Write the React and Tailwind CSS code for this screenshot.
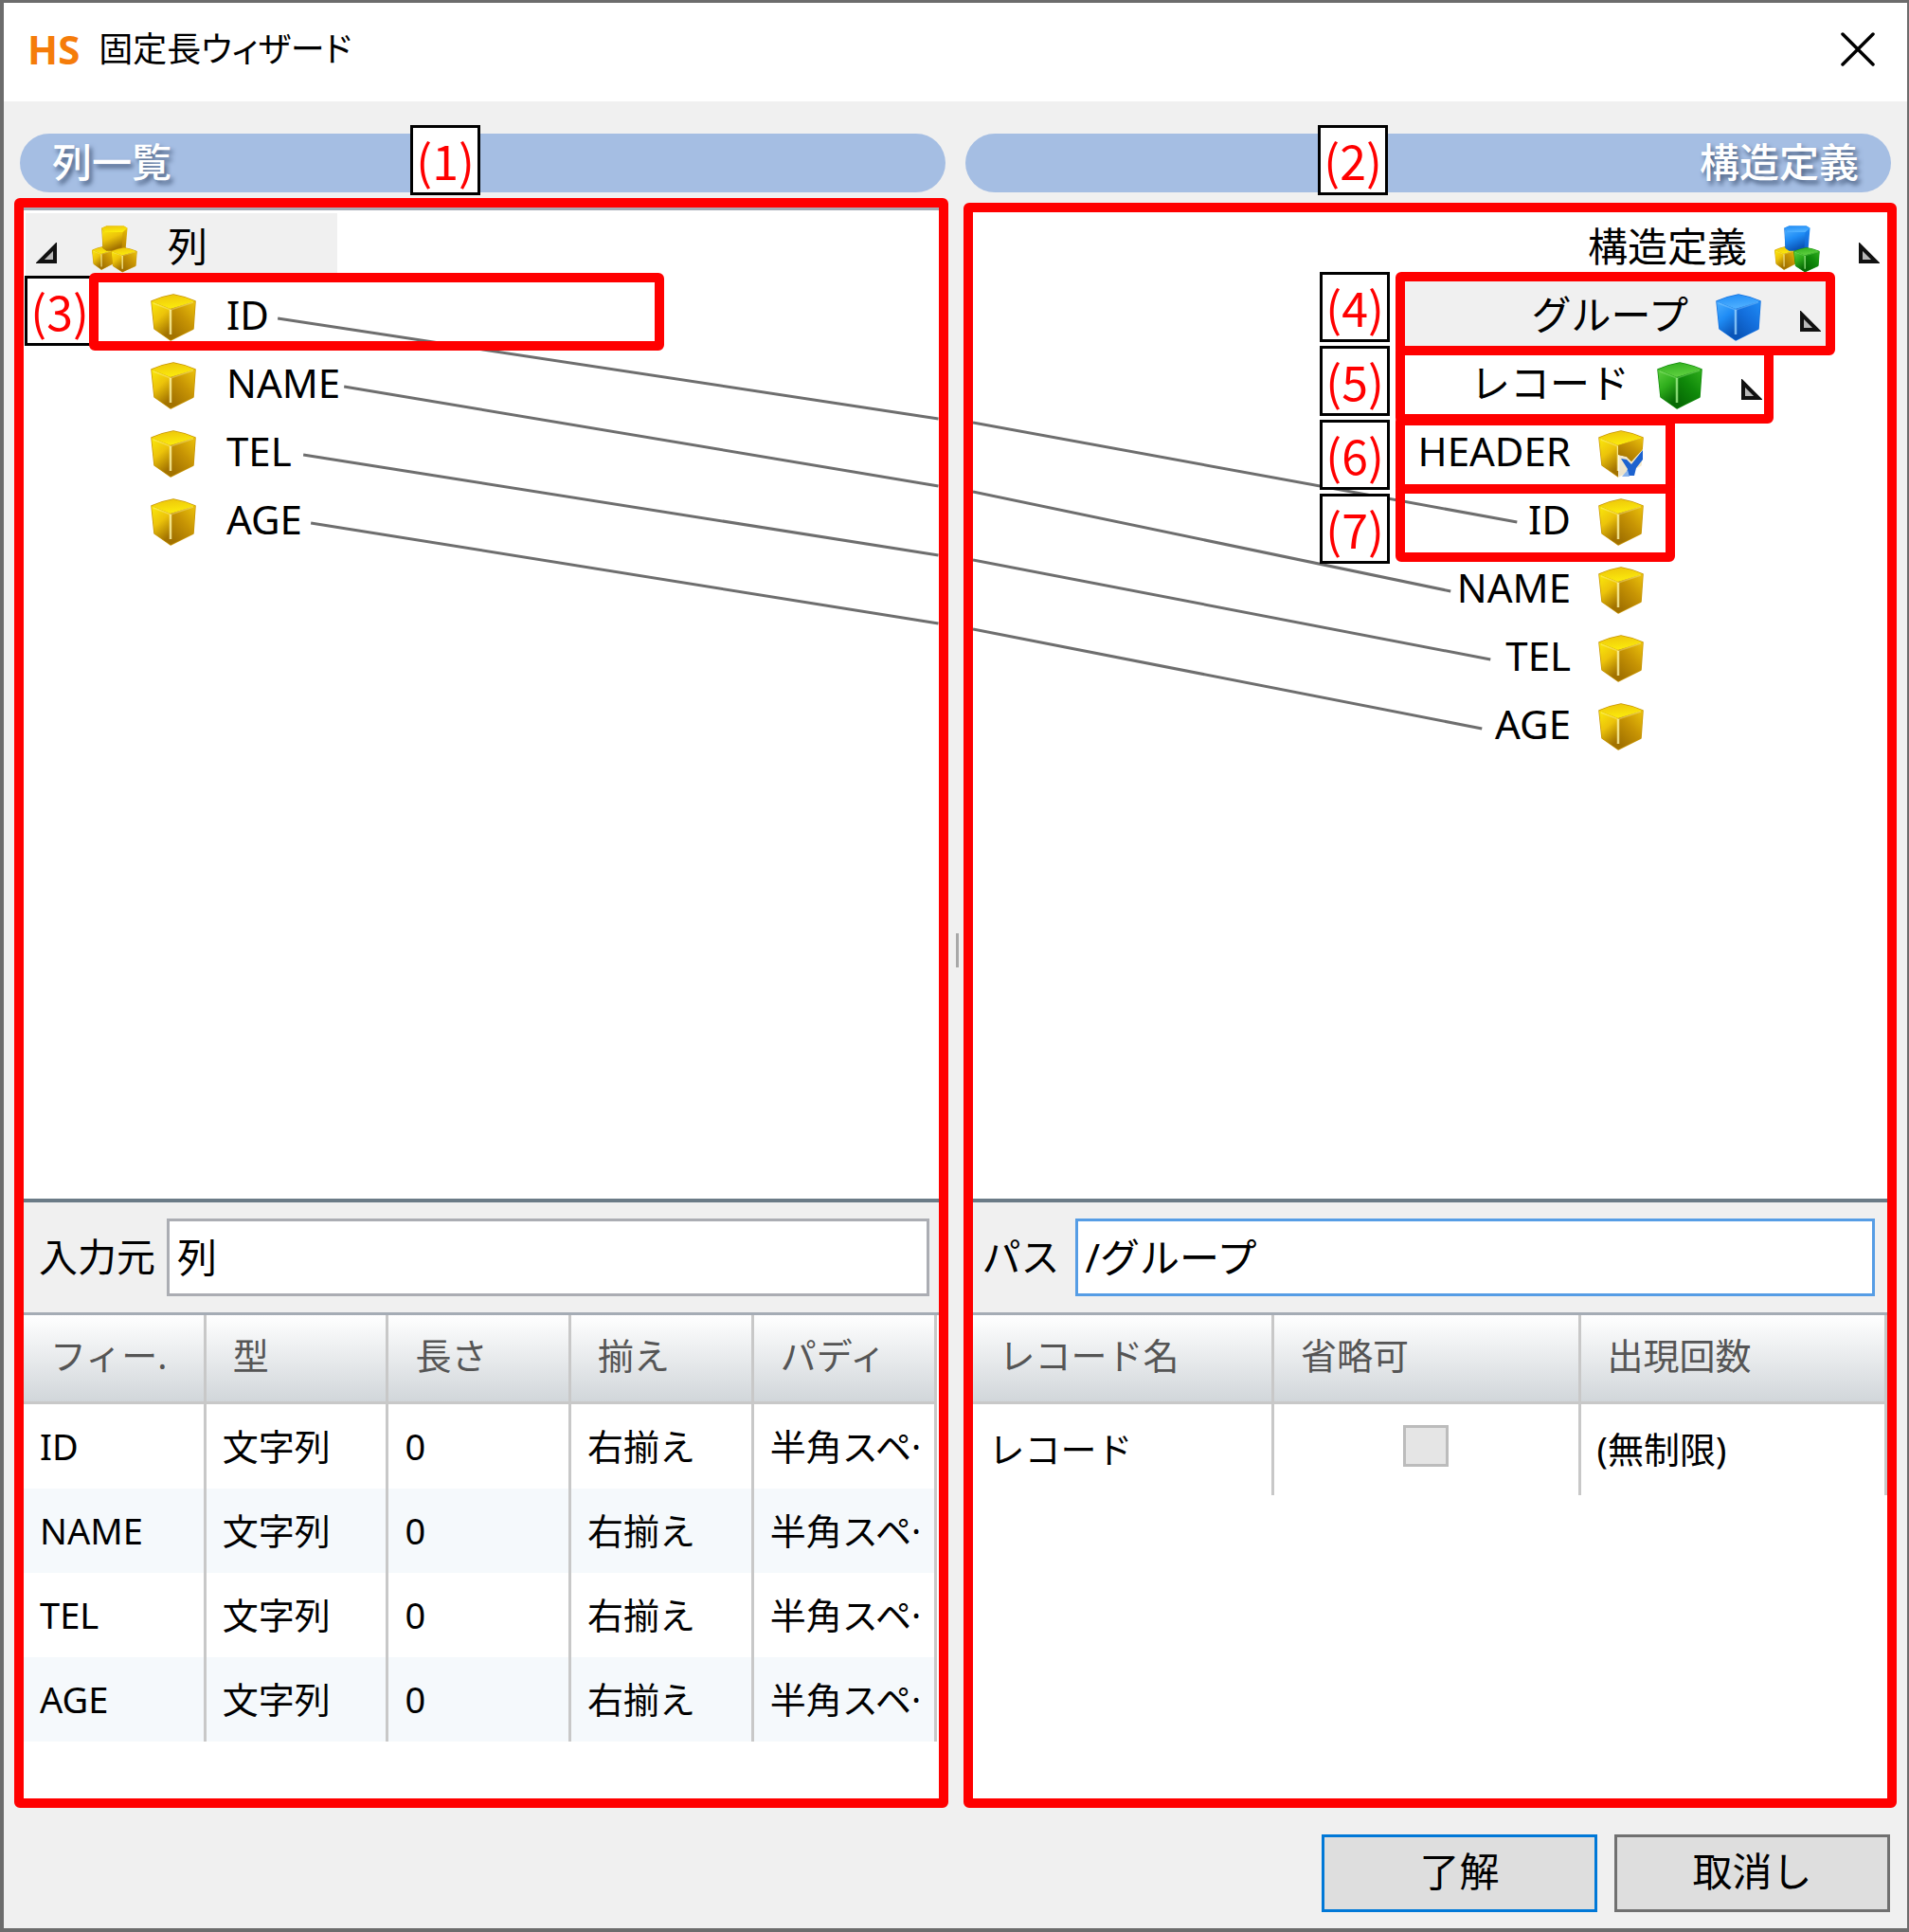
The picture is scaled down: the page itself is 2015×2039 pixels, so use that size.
import React, { useState } from "react";

const fields = ["ID", "NAME", "TEL", "AGE"];

const cubeColors = {
  gold: { top: "#fbea0c", left: "#ecc30a", right: "#c79404", edge: "#fff7a8", dark: "#a27200" },
  blue: { top: "#4fb0ff", left: "#1f8cf5", right: "#1470de", edge: "#9ad4ff", dark: "#0a55b8" },
  green: { top: "#5fd040", left: "#2fae1c", right: "#108a0a", edge: "#a4f08c", dark: "#066a04" },
};

function CubeDefs() {
  return (
    <svg width="0" height="0" className="absolute" aria-hidden="true">
      <defs>
        {Object.entries(cubeColors).map(([name, c]) => (
          <React.Fragment key={name}>
            <linearGradient id={`${name}-top`} x1="0" y1="0" x2="0.3" y2="1">
              <stop offset="0" stopColor={c.left} />
              <stop offset="1" stopColor={c.top} />
            </linearGradient>
            <linearGradient id={`${name}-left`} x1="0" y1="0" x2="0.4" y2="1">
              <stop offset="0" stopColor={c.top} />
              <stop offset="0.5" stopColor={c.left} />
              <stop offset="1" stopColor={c.dark} />
            </linearGradient>
            <linearGradient id={`${name}-right`} x1="1" y1="0" x2="0.3" y2="1">
              <stop offset="0" stopColor={c.left} />
              <stop offset="0.5" stopColor={c.right} />
              <stop offset="1" stopColor={c.dark} />
            </linearGradient>
          </React.Fragment>
        ))}
      </defs>
    </svg>
  );
}

function CubeShape({ color }) {
  const c = cubeColors[color];
  return (
    <g strokeLinejoin="round">
      <path d="M1 8 Q12 3 24 1 Q36 3 47 8 L45 37 L21 49 L4 37 Z" fill={c.right} stroke={c.right} strokeWidth="1.5" />
      <path d="M1 8 Q12 3 24 1 Q36 3 47 8 L21 16 Z" fill={`url(#${color}-top)`} />
      <path d="M1 8 L21 16 L21 49 L4 37 Z" fill={`url(#${color}-left)`} />
      <path d="M21 16 L47 8 L45 37 L21 49 Z" fill={`url(#${color}-right)`} />
      <path d="M3 10 L21 17 L45 9" fill="none" stroke={c.edge} strokeWidth="1.5" opacity="0.35" />
      <path d="M21 17 V43" stroke={c.edge} strokeWidth="2.5" opacity="0.8" />
    </g>
  );
}

function Cube({ color = "gold", checked }) {
  return (
    <svg viewBox="0 0 48 50" className="mt-[3px] h-[50px] w-12 shrink-0" aria-hidden="true">
      <CubeShape color={color} />
      {checked && (
        <>
          <path d="M21 26 L30 28 L35 33 L48 19 V50 H21 Z" fill="#fff" opacity="0.8" />
          <path d="M21 16 L47 8 L46 21 L35 33 L30 28 L21 26 Z" fill="url(#gold-right)" />
          <path d="M24 30 L30 31 L35 36 L47 21 V31 L40 40 L38 48 H29 L31 41 Z" fill="#1c62cf" />
          <path d="M25 49 L31 42 L33 49 Z" fill="#8ab4ec" />
        </>
      )}
    </svg>
  );
}

function CubeGroup({ colors }) {
  return (
    <svg viewBox="0 0 48 50" className="mt-[3px] h-[50px] w-12 shrink-0" aria-hidden="true">
      <g transform="translate(0 22) scale(0.48 0.5)">
        <CubeShape color={colors[1]} />
      </g>
      <g transform="translate(9 0) scale(0.62 0.54)">
        <path d="M2 5 L10 1 H40 L46 5 L43 45 L36 49 H10 L4 44 Z" fill={`url(#${colors[0]}-right)`} />
        <path d="M2 5 L10 1 H40 L46 5 L38 13 H7 Z" fill={`url(#${colors[0]}-top)`} />
        <path d="M3 7 L7 13 H38 L36 49 H10 L4 44 Z" fill={`url(#${colors[0]}-left)`} />
      </g>
      <g transform="translate(20 23) scale(0.58 0.53)">
        <CubeShape color={colors[2]} />
      </g>
    </svg>
  );
}

function Toggle({ flip }) {
  return (
    <button type="button" aria-label="開閉" className="block">
      <svg viewBox="0 0 22 22" className="mt-3 size-[22px]" aria-hidden="true">
        <path
          d={flip ? "M2 4 V20 H18 Z" : "M20 4 V20 H4 Z"}
          fill="#b8b8b8"
          stroke="#111"
          strokeWidth="4"
        />
      </svg>
    </button>
  );
}

function Badge({ n, className = "" }) {
  return (
    <span
      className={`flex size-[74px] items-center justify-center border-3 border-black bg-white pb-[2px] font-['Noto_Sans_CJK_JP',sans-serif] text-[50px] leading-none font-normal text-[#ff0000] ${className}`}
    >
      ({n})
    </span>
  );
}

function Callout({ className }) {
  return (
    <span
      className={`pointer-events-none absolute h-[82px] rounded-md border-10 border-[#ff0000] ${className}`}
    />
  );
}

function PanelTitle({ children, className }) {
  return (
    <h2
      className={`relative flex h-[62px] items-center rounded-full bg-[#a5bee3] px-[34px] pb-[2px] text-[42px] font-medium text-white [text-shadow:3px_4px_5px_#4a5f80] ${className}`}
    >
      {children}
    </h2>
  );
}

// lines that link a field in the left tree to one in the right tree
function Links({ lines }) {
  return (
    <svg
      viewBox="0 0 965 560"
      preserveAspectRatio="none"
      className="pointer-events-none absolute top-0 left-0 h-[560px] w-full"
      aria-hidden="true"
    >
      {lines.map((l) => (
        <line
          key={l[1]}
          x1={l[0]}
          y1={l[1]}
          x2={l[2]}
          y2={l[3]}
          stroke="#6e6e6e"
          strokeWidth="3"
        />
      ))}
    </svg>
  );
}

const leftLines = [
  [268, 111, 965, 217],
  [338, 183, 965, 288],
  [295, 255, 965, 361],
  [303, 327, 965, 433],
];

const rightLines = [
  [0, 221, 574, 326],
  [0, 294, 504, 399],
  [0, 366, 546, 471],
  [0, 439, 537, 544],
];

const th = "overflow-hidden border-r-3 border-b-3 border-[#c8c8c8] pb-2 pl-7 text-left font-normal whitespace-nowrap";
const td = "overflow-hidden border-r-3 border-[#c8c8c8] pb-[2px] pl-[17px] whitespace-nowrap";

function ColumnPanel() {
  const [source, setSource] = useState("列");
  return (
    <section className="flex flex-col rounded-md border-10 border-[#ff0000] bg-white">
      <div className="flex-1 border-t-3 border-[#a5acb5] pt-[3px]">
        <div className="relative">
          <Links lines={leftLines} />
          <ul>
            <li className="flex h-[72px] w-[331px] items-center bg-[#f0f0f0] bg-clip-content pl-[2px]">
              <span className="w-[70px] pl-[11px]">
                <Toggle />
              </span>
              <CubeGroup colors={["gold", "gold", "gold"]} />
              <span className="pb-[2px] pl-8">列</span>
            </li>
            {fields.map((name, i) => (
              <li key={name} className="relative flex h-[72px] items-center pl-[134px]">
                <Cube />
                <span className="pb-[2px] pl-8">{name}</span>
                {i === 0 && (
                  <>
                    <Badge n={3} className="absolute -top-[6px] left-px" />
                    <Callout className="-top-[9px] left-[69px] w-[607px]" />
                  </>
                )}
              </li>
            ))}
          </ul>
        </div>
      </div>
      <div className="flex items-center gap-3 border-t-4 border-[#6b7b87] bg-[#f0f0f0] py-[17px] pr-[10px] pl-4">
        <label htmlFor="source" className="shrink-0 pb-[2px] text-[41px]">
          入力元
        </label>
        <input
          id="source"
          value={source}
          onChange={(e) => setSource(e.target.value)}
          className="h-[82px] min-w-0 flex-1 border-3 border-[#abadb3] bg-white px-2 pb-[6px] outline-none"
        />
      </div>
      <div className="h-[513px] border-t-3 border-[#a5acb5] text-[38px]">
        <table className="w-full table-fixed border-separate border-spacing-0 pr-[2px]">
          <thead>
            <tr className="h-[94px] bg-linear-to-b from-white to-[#d0d5d9] text-[#555]">
              <th className={th}>フィー.</th>
              <th className={th}>型</th>
              <th className={th}>長さ</th>
              <th className={th}>揃え</th>
              <th className={th}>パディ</th>
            </tr>
          </thead>
          <tbody>
            {fields.map((name) => (
              <tr key={name} className="h-[89px] even:bg-[#f5f9fc]">
                <td className={td}>{name}</td>
                <td className={td}>文字列</td>
                <td className={td}>0</td>
                <td className={td}>右揃え</td>
                <td className={td}>半角スペ·</td>
              </tr>
            ))}
          </tbody>
        </table>
      </div>
    </section>
  );
}

function StructurePanel() {
  const [path, setPath] = useState("/グループ");
  return (
    <section className="mt-[5px] flex flex-col rounded-md border-10 border-[#ff0000] bg-white">
      <div className="flex-1 pt-px">
        <div className="relative">
          <Links lines={rightLines} />
          <ul>
            <li className="flex h-[72px] items-center justify-end pr-2">
              <span className="pr-[29px] pb-[2px]">構造定義</span>
              <CubeGroup colors={["blue", "gold", "green"]} />
              <span className="pl-[41px]">
                <Toggle flip />
              </span>
            </li>
            <li className="relative flex h-[72px] items-center justify-end pr-[70px]">
              <span className="pointer-events-none absolute -top-[10px] right-[55px] h-[88px] w-[464px] rounded-md border-10 border-[#ff0000] bg-[#f0f0f0]" />
              <span className="relative pr-[29px] pb-[2px]">グループ</span>
              <span className="relative flex">
                <Cube color="blue" />
              </span>
              <span className="relative pl-[41px]">
                <Toggle flip />
              </span>
            </li>
            <li className="relative flex h-[72px] items-center justify-end pr-[132px]">
              <span className="pr-[29px] pb-[2px]">レコード</span>
              <Cube color="green" />
              <span className="pl-[41px]">
                <Toggle flip />
              </span>
              <Callout className="-top-1 right-[120px] w-[399px]" />
            </li>
            <li className="relative flex h-[72px] items-center justify-end pr-[257px]">
              <span className="pr-[29px] pb-[2px]">HEADER</span>
              <Cube checked />
              <Callout className="-top-[2px] right-[224px] w-[295px]" />
            </li>
            {fields.map((name, i) => (
              <li key={name} className="relative flex h-[72px] items-center justify-end pr-[257px]">
                <span className="pr-[29px] pb-[2px]">{name}</span>
                <Cube />
                {i === 0 && <Callout className="-top-[2px] right-[224px] w-[295px]" />}
              </li>
            ))}
          </ul>
          <div className="absolute top-[62px] right-[525px] flex flex-col gap-1">
            <Badge n={4} />
            <Badge n={5} />
            <Badge n={6} />
            <Badge n={7} />
          </div>
        </div>
      </div>
      <div className="flex items-center gap-4 border-t-4 border-[#6b7b87] bg-[#f0f0f0] py-[17px] pr-[13px] pl-[10px]">
        <label htmlFor="path" className="shrink-0 pb-[2px] text-[41px]">
          パス
        </label>
        <input
          id="path"
          value={path}
          onChange={(e) => setPath(e.target.value)}
          className="h-[82px] min-w-0 flex-1 border-3 border-[#569de5] bg-white px-2 pb-[6px] outline-none"
        />
      </div>
      <div className="h-[513px] border-t-3 border-[#a5acb5] text-[38px]">
        <table className="w-full table-fixed border-separate border-spacing-0">
          <thead>
            <tr className="h-[94px] bg-linear-to-b from-white to-[#d0d5d9] text-[#555]">
              <th className={`w-[33%] ${th}`}>レコード名</th>
              <th className={th}>省略可</th>
              <th className={th}>出現回数</th>
            </tr>
          </thead>
          <tbody>
            <tr className="h-24">
              <td className={td}>レコード</td>
              <td className="border-r-3 border-[#c8c8c8] text-center">
                <input
                  type="checkbox"
                  aria-label="省略可"
                  disabled
                  className="mb-2 h-11 w-12 appearance-none border-3 border-[#bcbcbc] bg-[#e5e5e5] align-middle"
                />
              </td>
              <td className={td}>(無制限)</td>
            </tr>
          </tbody>
        </table>
      </div>
    </section>
  );
}

function App() {
  return (
    <div className="flex min-h-screen flex-col border-4 border-t-3 border-r-2 border-[#6c6c6c] bg-[#f0f0f0] font-['Noto_Sans','Noto_Sans_CJK_JP',sans-serif] text-[42px] leading-none text-black">
      <CubeDefs />
      <header className="flex h-[104px] items-center bg-white pr-[34px] pb-[6px] pl-[25px]">
        <span className="font-bold text-[#f57c0a]">HS</span>
        <h1 className="pl-5 text-[36px] [font-feature-settings:'palt']">固定長ウィザード</h1>
        <button type="button" aria-label="閉じる" className="ml-auto">
          <svg viewBox="0 0 36 36" className="size-9" aria-hidden="true">
            <path d="M2 2 L34 34 M34 2 L2 34" stroke="#000" strokeWidth="3.5" strokeLinecap="round" />
          </svg>
        </button>
      </header>

      <div className="grid grid-cols-2 gap-[21px] px-[17px] pt-[34px] pb-[6px]">
        <PanelTitle>
          列一覧
          <Badge n={1} className="absolute -top-[9px] left-[412px] text-shadow-none" />
        </PanelTitle>
        <PanelTitle className="justify-end">
          構造定義
          <Badge n={2} className="absolute -top-[9px] left-[372px] text-shadow-none" />
        </PanelTitle>
      </div>

      <main className="relative grid flex-1 grid-cols-2 gap-4 px-[11px]">
        <ColumnPanel />
        <StructurePanel />
        <span className="absolute top-[776px] left-1/2 h-9 w-[3px] bg-[#a8a8a8]" />
      </main>

      <footer className="flex justify-end gap-[18px] px-[18px] pt-7 pb-[17px]">
        <button type="button" className="h-[82px] w-[291px] border-3 border-[#0078d7] bg-[#dedede] pb-1">
          了解
        </button>
        <button type="button" className="h-[82px] w-[291px] border-3 border-[#707070] bg-[#dedede] pb-1">
          取消し
        </button>
      </footer>
    </div>
  );
}

export default App;
